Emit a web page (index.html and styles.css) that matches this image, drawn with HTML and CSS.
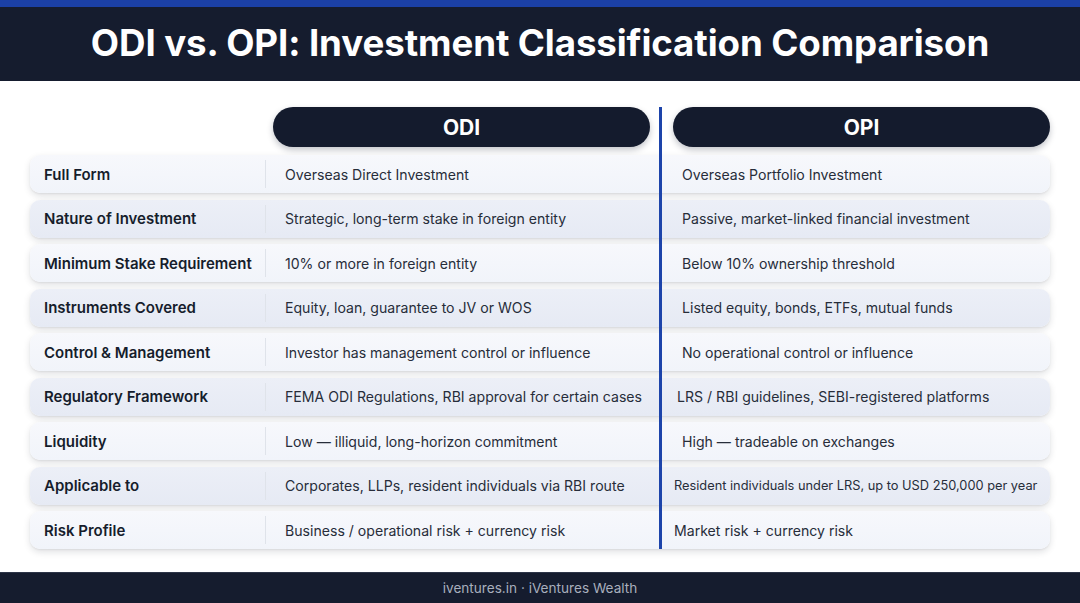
FILE: index.html
```html
<!DOCTYPE html>
<html lang="en">
<head>
<meta charset="utf-8">
<title>ODI vs. OPI</title>
<link rel="stylesheet" href="styles.css">
</head>
<body>
<header class="topbar">
  <h1 class="title">ODI vs. OPI: Investment Classification Comparison</h1>
</header>
<main class="main">
  <div class="table">
    <div class="divider-line"></div>
    <div class="head-row">
      <div class="pill pill-odi">ODI</div>
      <div class="pill pill-opi">OPI</div>
    </div>
    <div class="row">
      <div class="label">Full Form</div>
      <div class="odi">Overseas Direct Investment</div>
      <div class="opi">Overseas Portfolio Investment</div>
    </div>
    <div class="row alt">
      <div class="label">Nature of Investment</div>
      <div class="odi">Strategic, long-term stake in foreign entity</div>
      <div class="opi">Passive, market-linked financial investment</div>
    </div>
    <div class="row">
      <div class="label">Minimum Stake Requirement</div>
      <div class="odi">10% or more in foreign entity</div>
      <div class="opi">Below 10% ownership threshold</div>
    </div>
    <div class="row alt">
      <div class="label">Instruments Covered</div>
      <div class="odi">Equity, loan, guarantee to JV or WOS</div>
      <div class="opi">Listed equity, bonds, ETFs, mutual funds</div>
    </div>
    <div class="row">
      <div class="label">Control &amp; Management</div>
      <div class="odi">Investor has management control or influence</div>
      <div class="opi">No operational control or influence</div>
    </div>
    <div class="row alt">
      <div class="label">Regulatory Framework</div>
      <div class="odi">FEMA ODI Regulations, RBI approval for certain cases</div>
      <div class="opi opi-mid">LRS / RBI guidelines, SEBI-registered platforms</div>
    </div>
    <div class="row">
      <div class="label">Liquidity</div>
      <div class="odi">Low — illiquid, long-horizon commitment</div>
      <div class="opi">High — tradeable on exchanges</div>
    </div>
    <div class="row alt">
      <div class="label">Applicable to</div>
      <div class="odi">Corporates, LLPs, resident individuals via RBI route</div>
      <div class="opi opi-tight opi-small">Resident individuals under LRS, up to USD 250,000 per year</div>
    </div>
    <div class="row">
      <div class="label">Risk Profile</div>
      <div class="odi">Business / operational risk + currency risk</div>
      <div class="opi opi-tight">Market risk + currency risk</div>
    </div>
  </div>
</main>
<footer class="footer">iventures.in · iVentures Wealth</footer>
</body>
</html>
```

FILE: styles.css
```css
* { box-sizing: border-box; }
html, body {
  margin: 0;
  padding: 0;
  width: 1080px;
  height: 603px;
  overflow: hidden;
  background: #ffffff;
  font-family: Inter, "Noto Sans", "Liberation Sans", sans-serif;
}
.topbar {
  height: 81px;
  border-top: 7px solid #1b40a6;
  background: #151c2e;
  display: flex;
  align-items: center;
  justify-content: center;
}
.title {
  margin: 0;
  color: #ffffff;
  font-size: 36.7px;
  font-weight: 700;
  letter-spacing: -0.1px;
  line-height: 1;
  padding-bottom: 2px;
}
.main {
  height: 491px;
  padding: 26px 0 0 30px;
}
.table {
  position: relative;
  width: 1020px;
  display: flex;
  flex-direction: column;
  gap: 6.5px;
}
.divider-line {
  position: absolute;
  left: 629px;
  top: 0;
  width: 3px;
  height: 442px;
  background: #1d44aa;
  z-index: 2;
}
.head-row {
  display: flex;
  padding-left: 243px;
  gap: 23px;
  margin-bottom: 1.5px;
}
.pill {
  width: 377px;
  height: 40px;
  border-radius: 20px;
  background: #141b2d;
  color: #ffffff;
  font-size: 21px;
  font-weight: 700;
  display: flex;
  align-items: center;
  justify-content: center;
  box-shadow: 0 3px 6px rgba(15, 23, 42, 0.25);
}
.row {
  height: 38px;
  border-radius: 10px;
  background: linear-gradient(180deg, #f7f8fc 0%, #f1f4fa 100%);
  box-shadow: 0 3px 7px rgba(15, 23, 42, 0.13), 0 1px 2px rgba(15, 23, 42, 0.06);
  display: flex;
  align-items: center;
  font-size: 14.1px;
  color: #272d3a;
}
.row.alt {
  background: linear-gradient(180deg, #eceff7 0%, #e6eaf4 100%);
}
.label {
  width: 235px;
  flex: none;
  padding-left: 14px;
  font-size: 15px;
  font-weight: 600;
  color: #161d2c;
  white-space: nowrap;
}
.odi {
  width: 397px;
  flex: none;
  height: 28px;
  padding-left: 19px;
  border-left: 1.5px solid #dfe3ea;
  display: flex;
  align-items: center;
  white-space: nowrap;
}
.opi {
  flex: 1;
  min-width: 0;
  padding-left: 20px;
  white-space: nowrap;
}
.opi-mid { padding-left: 15px; }
.opi-tight { padding-left: 12px; }
.opi-small { font-size: 12.8px; }
.footer {
  height: 31px;
  background: #151c2e;
  border-top: 1px solid #2d3548;
  color: #a8afbd;
  font-size: 13.6px;
  display: flex;
  align-items: center;
  justify-content: center;
}
```
